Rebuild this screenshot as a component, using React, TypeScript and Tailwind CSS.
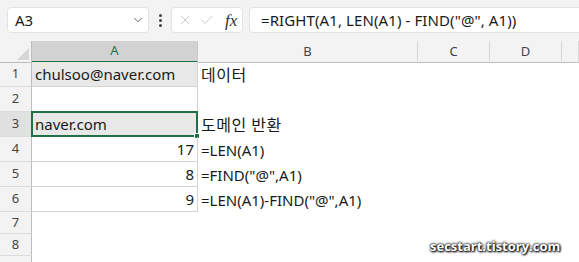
import { ChevronDown, X, Check } from 'lucide-react'

const FONT = "font-['Noto_Sans','Noto_Sans_CJK_KR',sans-serif]"

// column widths: row header, A, B, C, D, E
const COLS = 'grid-cols-[32px_166px_220px_72px_72px_1fr]'

interface Row {
  n: number | null
  h: string
  a: string
  b: string
  ko?: boolean
  num?: boolean
  fill?: boolean
  sel?: boolean
  boxed: boolean
}

const ROWS: Row[] = [
  { n: 1, h: 'h-[25px]', a: 'chulsoo@naver.com', b: '데이터', ko: true, fill: true, boxed: true },
  { n: 2, h: 'h-[25px]', a: '', b: '', boxed: true },
  { n: 3, h: 'h-[25px]', a: 'naver.com', b: '도메인 반환', ko: true, fill: true, sel: true, boxed: true },
  { n: 4, h: 'h-[25px]', a: '17', b: '=LEN(A1)', num: true, boxed: true },
  { n: 5, h: 'h-[25px]', a: '8', b: '=FIND("@",A1)', num: true, boxed: true },
  { n: 6, h: 'h-[25px]', a: '9', b: '=LEN(A1)-FIND("@",A1)', num: true, boxed: true },
  { n: 7, h: 'h-[22px]', a: '', b: '', boxed: false },
  { n: 8, h: 'h-[22px]', a: '', b: '', boxed: false },
  { n: null, h: 'h-[22px]', a: '', b: '', boxed: false },
]

export default function App() {
  return (
    <div className={`relative w-[579px] h-[262px] overflow-hidden bg-white text-[#1a1a1a] ${FONT}`}>
      {/* Formula bar */}
      <div className="h-[41px] bg-[#f3f3f3] flex items-start pt-[7px] pl-[7px]">
        <div className="w-[142px] h-[26px] bg-white rounded-[4px] border border-[#e3e3e3] flex items-center justify-between pl-[7px] pr-[3px]">
          <span className="text-[15px] leading-none">A3</span>
          <ChevronDown className="w-[14px] h-[14px] text-[#555]" strokeWidth={1.5} />
        </div>
        <div className="w-[22px] h-[26px] flex flex-col items-center justify-center gap-[2px]">
          <span className="w-[3px] h-[3px] rounded-full bg-[#444]" />
          <span className="w-[3px] h-[3px] rounded-full bg-[#444]" />
          <span className="w-[3px] h-[3px] rounded-full bg-[#444]" />
        </div>
        <div className="w-[72px] h-[26px] bg-white rounded-[4px] border border-[#e3e3e3] flex items-center pl-[5px] gap-[6px]">
          <X className="w-[16px] h-[16px] text-[#c4c4c4]" strokeWidth={1.3} />
          <Check className="w-[16px] h-[16px] text-[#c4c4c4]" strokeWidth={1.3} />
          <span className="font-['Liberation_Serif',serif] italic text-[17px] leading-none text-[#333] ml-[4px]">fx</span>
        </div>
        <div className="ml-[6px] flex-1 h-[26px] bg-white rounded-l-[4px] border border-r-0 border-[#e3e3e3] flex items-center pl-[11px]">
          <span className="text-[15px] leading-none tracking-[0.1px]">=RIGHT(A1, LEN(A1) - FIND("@", A1))</span>
        </div>
      </div>

      {/* Column headers */}
      <div className={`grid ${COLS} h-[21px]`}>
        <div className="bg-[#f3f3f3] border-r border-b border-[#bdbdbd] relative overflow-hidden">
          <div className="absolute right-[2px] bottom-[2px] w-0 h-0 border-l-[12px] border-l-transparent border-b-[12px] border-b-[#d6d6d6]" />
        </div>
        <div className="bg-[#d2d2d2] border-b-2 border-[#1e7145] border-r border-r-[#c8c8c8] flex items-center justify-center text-[13px] text-[#1e7145]">A</div>
        {['B', 'C', 'D', ''].map((c, i) => (
          <div key={i} className="bg-[#f3f3f3] border-b border-[#bdbdbd] border-r border-r-[#d8d8d8] flex items-center justify-center text-[13px] text-[#444]">
            {c}
          </div>
        ))}
      </div>

      {/* Rows */}
      {ROWS.map((r, i) => (
        <div key={i} className={`grid ${COLS} ${r.h}`}>
          <div className={`border-r border-[#bdbdbd] border-b border-b-[#dcdcdc] flex items-center justify-center text-[13px] text-[#444] ${r.sel ? 'bg-[#e1e1e1]' : 'bg-[#f3f3f3]'}`}>
            {r.n}
          </div>
          <div
            className={`relative flex items-end pb-[1px] px-[3px] text-[15px] leading-[22px] ${r.num ? 'justify-end' : ''} ${r.boxed ? 'border-r border-b border-[#d4d4d4]' : ''} ${r.fill ? 'bg-[#e8e8e8]' : ''}`}
          >
            {r.a}
            {r.sel && (
              <>
                <div className="absolute -left-[1px] -top-[1px] -right-[1px] -bottom-[1px] border-2 border-[#1e7145]" />
                <div className="absolute -right-[3px] -bottom-[3px] w-[6px] h-[6px] bg-[#1e7145] border border-white" />
              </>
            )}
          </div>
          <div className={`flex items-end pb-[1px] pl-[3px] leading-[22px] whitespace-nowrap ${r.ko ? 'text-[16px] tracking-[0.5px]' : 'text-[15px]'}`}>{r.b}</div>
          <div />
          <div />
          <div />
        </div>
      ))}

      {/* watermark */}
      <div className="absolute left-[430px] top-[237px] font-['Open_Sans',sans-serif] font-bold text-[13px] text-white [text-shadow:0_0_3px_#000,0_0_2px_#000,1px_1px_2px_#000]">
        secstart.tistory.com
      </div>
    </div>
  )
}
